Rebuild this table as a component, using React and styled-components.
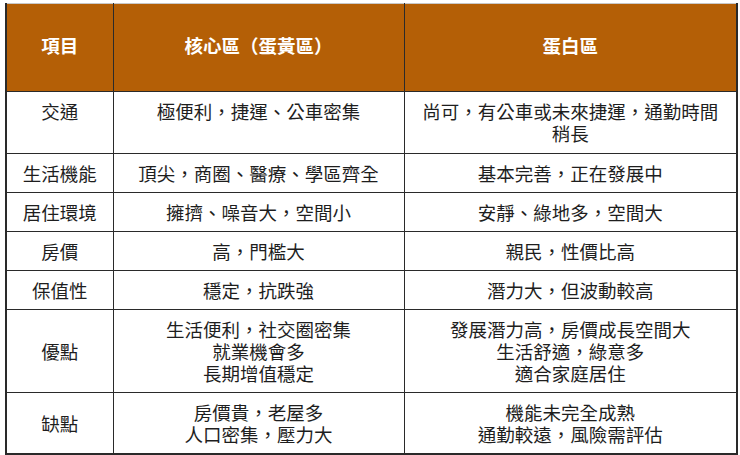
import styled, { createGlobalStyle } from "styled-components";

const GlobalStyle = createGlobalStyle`
    html, body {
        margin: 0;
        padding: 0;
        background: #ffffff;
    }
    body {
        font-family: "Noto Sans CJK TC", "Noto Sans", sans-serif;
    }
`;

const columns = ["項目", "核心區（蛋黃區）", "蛋白區"];

const rows = [
    { item: "交通", core: ["極便利，捷運、公車密集"], outer: ["尚可，有公車或未來捷運，通勤時間", "稍長"], top: true },
    { item: "生活機能", core: ["頂尖，商圈、醫療、學區齊全"], outer: ["基本完善，正在發展中"] },
    { item: "居住環境", core: ["擁擠、噪音大，空間小"], outer: ["安靜、綠地多，空間大"] },
    { item: "房價", core: ["高，門檻大"], outer: ["親民，性價比高"] },
    { item: "保值性", core: ["穩定，抗跌強"], outer: ["潛力大，但波動較高"] },
    { item: "優點", core: ["生活便利，社交圈密集", "就業機會多", "長期增值穩定"], outer: ["發展潛力高，房價成長空間大", "生活舒適，綠意多", "適合家庭居住"] },
    { item: "缺點", core: ["房價貴，老屋多", "人口密集，壓力大"], outer: ["機能未完全成熟", "通勤較遠，風險需評估"] },
];

function Lines({ lines }) {
    return lines.map((line, idx) => <Line key={idx}>{line}</Line>);
}

export default function App() {
    return (
        <Page>
            <GlobalStyle />
            <Table>
                <colgroup>
                    <col style={{ width: 107 }} />
                    <col style={{ width: 291 }} />
                    <col style={{ width: 333 }} />
                </colgroup>
                <thead>
                    <tr>
                        {columns.map((c) => (
                            <HeadCell key={c}>{c}</HeadCell>
                        ))}
                    </tr>
                </thead>
                <tbody>
                    {rows.map((row) => (
                        <tr key={row.item}>
                            <Cell $top={row.top}>{row.item}</Cell>
                            <Cell $top={row.top}><Lines lines={row.core} /></Cell>
                            <Cell $top={row.top}><Lines lines={row.outer} /></Cell>
                        </tr>
                    ))}
                </tbody>
            </Table>
        </Page>
    );
}

const Page = styled.div`
    padding: 3px 0 0 5px;
    width: 740px;
    height: 455px;
    box-sizing: border-box;
    background: #ffffff;
`;

const Table = styled.table`
    width: 731px;
    table-layout: fixed;
    border-collapse: collapse;
    border-top: 1px solid #c8c8c8;
    border-left: 2px solid #2a2a2a;
    border-right: 2px solid #2a2a2a;
    border-bottom: 2px solid #2a2a2a;
    font-size: 18.5px;
    line-height: 22px;
    color: #1e1e1e;
`;

const HeadCell = styled.th`
    height: 88px;
    padding: 0 6px 5px;
    background-color: #b45f06;
    color: #ffffff;
    font-weight: 700;
    text-align: center;
    vertical-align: middle;
    border: 1.5px solid #2a2a2a;
    border-top: none;
    box-sizing: border-box;
`;

const Cell = styled.td`
    padding: ${(p) => (p.$top ? "8px 6px 9px" : "8px 6px")};
    text-align: center;
    vertical-align: ${(p) => (p.$top ? "top" : "middle")};
    border: 1.5px solid #2a2a2a;
    font-weight: 400;
`;

const Line = styled.div`
    white-space: nowrap;
`;
